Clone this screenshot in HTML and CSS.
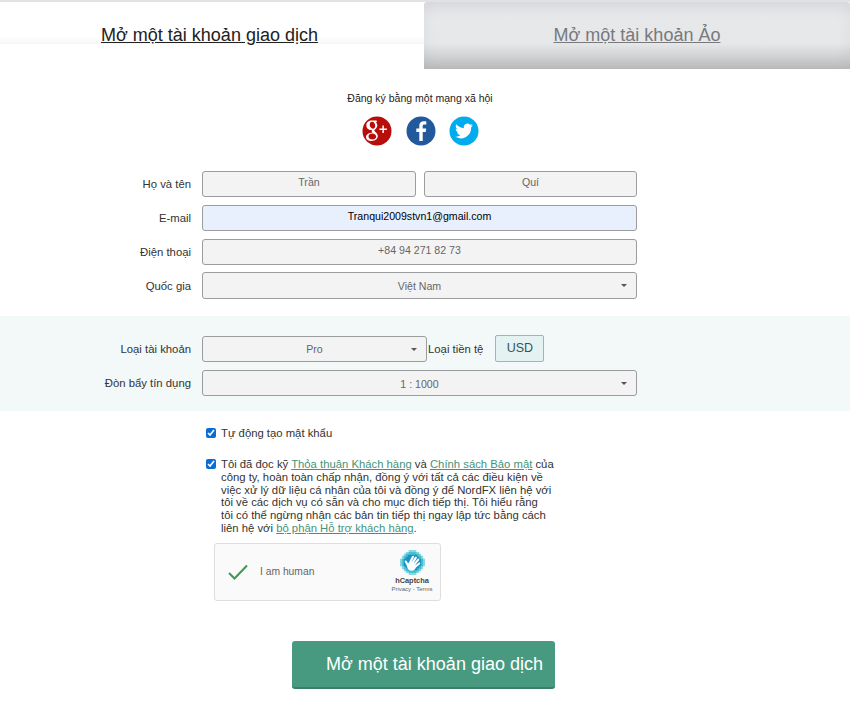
FILE: index.html
```html
<!DOCTYPE html>
<html lang="vi">
<head>
<meta charset="utf-8">
<title>Mở một tài khoản giao dịch</title>
<link rel="stylesheet" href="styles.css">
</head>
<body>
<div class="tabs">
  <div class="tab tab-active"><a href="#">Mở một tài khoản giao dịch</a></div>
  <div class="tab tab-demo"><a href="#">Mở một tài khoản Ảo</a></div>
</div>
<section class="social">
  <p class="social-title">Đăng ký bằng một mạng xã hội</p>
  <div class="social-icons">
    <svg class="icon" viewBox="0 0 30 30"><circle cx="15" cy="15" r="14.5" fill="#b70e0c"/><path d="M14.500 4.500h-5c-3.300 0-5.200 2.400-5.200 4.900 0 2.600 2 4.600 4.800 4.600l.9-.05c-.5 1.100-.2 2 .6 2.900-3.300 0-6.600 1.400-6.600 4.300 0 2.400 2.600 3.800 5.700 3.800 3.700 0 6.100-2.400 6.100-4.900 0-3.200-3.400-4-3.400-5.500 0-1.400 2.900-2.100 2.900-5.100 0-1.600-.8-2.800-1.700-3.500h1.500zM10.100 5.800c1.800 0 3.100 2 3.100 4.200 0 1.600-.9 2.700-2.300 2.700-1.800 0-3.200-2.100-3.200-4.100 0-1.600.9-2.800 2.400-2.800zm.2 11.700c2.200.05 3.900 1.500 3.900 3.100 0 1.700-1.500 2.900-3.600 2.900-2.300 0-4.100-1.400-4.100-3.100 0-1.800 1.700-2.950 3.800-2.900z" fill="#fff"/><path d="M20.400 9.500h1.500v3h3V14h-3v3h-1.500v-3h-3v-1.500h3z" fill="#fff"/></svg>
    <svg class="icon" viewBox="0 0 30 30"><circle cx="15" cy="15" r="14.500" fill="#22599d"/><path d="M16.700 25v-9h3l.5-3.500h-3.500v-2.200c0-1 .3-1.700 1.800-1.700h1.800V5.400c-.3 0-1.400-.1-2.600-.1-2.600 0-4.400 1.600-4.400 4.500v2.700h-3V16h3v9z" fill="#fff"/></svg>
    <svg class="icon icon-last" viewBox="0 0 30 30"><circle cx="15" cy="15" r="14.500" fill="#00aced"/><path d="M24 9.300c-.7.300-1.400.5-2.100.6.800-.5 1.300-1.200 1.600-2-.7.400-1.500.7-2.300.9a3.700 3.700 0 0 0-6.300 3.400c-3-.15-5.800-1.600-7.600-3.900-1 1.700-.5 3.800 1.100 4.900-.6 0-1.200-.2-1.700-.5 0 1.800 1.300 3.300 3 3.700-.5.150-1.100.15-1.700.05.5 1.500 1.900 2.500 3.500 2.600A7.500 7.500 0 0 1 6 20.600 10.500 10.500 0 0 0 22.200 11.300c.7-.5 1.300-1.200 1.800-2z" fill="#fff"/></svg>
  </div>
</section>
<form class="form">
  <div class="fields">
    <div class="row">
      <label class="label">Họ và tên</label>
      <div class="pair">
        <div class="control text-top">Trần</div>
        <div class="control text-top">Quí</div>
      </div>
    </div>
    <div class="row">
      <label class="label">E-mail</label>
      <div class="control text-top autofill">Tranqui2009stvn1@gmail.com</div>
    </div>
    <div class="row">
      <label class="label">Điện thoại</label>
      <div class="control text-top">+84 94 271 82 73</div>
    </div>
    <div class="row">
      <label class="label">Quốc gia</label>
      <div class="control select">Việt Nam<span class="caret"></span></div>
    </div>
  </div>
  <div class="band">
    <div class="row">
      <label class="label">Loại tài khoản</label>
      <div class="account">
        <div class="control select account-type">Pro<span class="caret"></span></div>
        <span class="currency-label">Loại tiền tệ</span>
        <span class="currency">USD</span>
      </div>
    </div>
    <div class="row">
      <label class="label">Đòn bẩy tín dụng</label>
      <div class="control select leverage">1 : 1000<span class="caret"></span></div>
    </div>
  </div>
  <div class="agreements">
    <label class="check check-auto"><input type="checkbox" checked><span>Tự động tạo mật khẩu</span></label>
    <label class="check check-terms"><input type="checkbox" checked><span>Tôi đã đọc kỹ <a href="#">Thỏa thuận Khách hàng</a> và <a href="#">Chính sách Bảo mật</a> của công ty, hoàn toàn chấp nhận, đồng ý với tất cả các điều kiện về việc xử lý dữ liệu cá nhân của tôi và đồng ý để NordFX liên hệ với tôi về các dịch vụ có sẵn và cho mục đích tiếp thị. Tôi hiểu rằng<br>tôi có thể ngừng nhận các bản tin tiếp thị ngay lập tức bằng cách<br>liên hệ với <a href="#">bộ phận Hỗ trợ khách hàng</a>.</span></label>
  </div>
  <div class="captcha">
    <svg class="captcha-check" viewBox="0 0 20 16"><path d="M1 9l5.500 5.500L19 1.500" fill="none" stroke="#3d9a4f" stroke-width="2"/></svg>
    <span class="captcha-text">I am human</span>
    <div class="captcha-brand">
      <svg class="captcha-logo" viewBox="0 0 26 26">
        <path d="M9 0h8v2h3v2h2v2h2v3h2v8h-2v3h-2v2h-2v2h-3v2H9v-2H6v-2H4v-2H2v-3H0V9h2V6h2V4h2V2h3z" fill="#8ad8df"/>
        <path d="M9 2h8v2h3v2h2v3h2v8h-2v3h-2v2h-3v2H9v-2H6v-2H4v-3H2V9h2V6h2V4h3z" fill="#49bfd2"/>
        <path d="M8 5h10v2h2v2h2v8h-2v2h-2v2H8v-2H6v-2H4V9h2V7h2z" fill="#1f90c2"/>
        <g fill="none" stroke="#fff" stroke-width="2.200" stroke-linecap="round">
          <path d="M10 14l3.500-7M12 15l4.500-7M14 16l5-6M15 18l5-4M8.500 16.500L6 12"/>
        </g>
        <circle cx="12" cy="17" r="4.600" fill="#fff"/>
      </svg>
      <span class="captcha-name">hCaptcha</span>
      <span class="captcha-links">Privacy - Terms</span>
    </div>
  </div>
  <div class="submit-wrap"><button class="submit" type="button">Mở một tài khoản giao dịch</button></div>
</form>
</body>
</html>
```

FILE: styles.css
```css
* { box-sizing: border-box; }
html, body { margin: 0; padding: 0; }
body {
  width: 850px;
  background: #fff;
  font-family: "Liberation Sans", Arial, sans-serif;
  font-size: 12px;
  color: #222;
  overflow: hidden;
}
.tabs {
  display: flex;
  height: 69px;
  padding-top: 2px;
  background: linear-gradient(#e2e2e2 0, #e2e2e2 2px, #fff 2px);
}
.tab {
  padding-top: 22px;
  text-align: center;
  font-size: 18px;
  line-height: 22px;
}
.tab a { color: inherit; }
.tab-active {
  flex: 0 0 424px;
  height: 42px;
  padding-right: 5px;
  color: #222;
  border-radius: 0 3px 0 0;
  background: linear-gradient(#fff 0, #fff 82%, #f7f7f7 100%);
}
.tab-demo {
  flex: 0 0 426px;
  height: 67px;
  color: #77797d;
  border-radius: 3px 3px 0 0;
  background: linear-gradient(#dedfe2 0, #e7e8ea 25%, #e6e7e9 62%, #bcbdbf 100%);
  box-shadow: inset 0 0 16px rgba(0, 0, 0, .05);
}
.social {
  display: flex;
  flex-direction: column;
  align-items: center;
  padding: 22px 10px 25px 0;
}
.social-title {
  margin: 0;
  font-size: 10.500px;
  line-height: 14px;
  color: #222;
}
.social-icons {
  display: flex;
  gap: 14px;
  margin-top: 11px;
  height: 30px;
}
.icon { width: 30px; height: 30px; display: block; }
.icon-last { margin-left: -1px; }
.fields { display: flex; flex-direction: column; gap: 8px; }
.fields .row:last-child { margin-top: -1px; }
.row {
  display: grid;
  grid-template-columns: 191px 435px;
  column-gap: 11px;
  align-items: center;
}
.label {
  text-align: right;
  font-size: 11.330px;
  color: #333;
  line-height: 14px;
}
.pair { display: grid; grid-template-columns: 214px 213px; column-gap: 8px; }
.control {
  position: relative;
  height: 26px;
  border: 1px solid #9a9c9e;
  border-radius: 3px;
  background: #f3f3f3;
  color: #666;
  font-size: 10.600px;
  text-align: center;
  line-height: 24px;
}
.text-top { line-height: 20px; }
.autofill { background: #e8f0fe; color: #000; }
.select { height: 27px; line-height: 26px; }
.caret {
  position: absolute;
  right: 9px;
  top: 11px;
  border: 3.500px solid transparent;
  border-top: 3.500px solid #555;
  border-bottom: 0;
}
.band {
  margin-top: 17px;
  height: 95px;
  padding-top: 19px;
  background: #f3f8f8;
  display: flex;
  flex-direction: column;
  gap: 8px;
}
.account { display: flex; align-items: center; }
.account-type { width: 225px; height: 26px; line-height: 24px; }
.currency-label { margin-left: 1px; font-size: 11.330px; color: #333; }
.currency {
  margin-left: 12px;
  width: 49px;
  height: 27px;
  border: 1px solid #9fb5b5;
  border-radius: 2px;
  background: #e4f2f2;
  color: #33545a;
  font-size: 12.500px;
  line-height: 24px;
  text-align: center;
}
.leverage { height: 26px; line-height: 26px; }
.agreements { display: flex; flex-direction: column; margin-left: 206px; width: 352px; padding-top: 16px; }
.check { display: grid; grid-template-columns: 15px 1fr; font-size: 11.300px; line-height: 12.800px; color: #333; }
.check input { width: 10px; height: 10px; margin: 1px 0 0; accent-color: #0a6cd6; }
.check-auto { height: 14px; }
.check-terms { margin-top: 17px; }
.check a { color: #45947a; }
.captcha {
  display: flex;
  align-items: center;
  width: 227px;
  height: 58px;
  margin: 8px 0 0 214px;
  border: 1px solid #dedede;
  border-radius: 3px;
  background: #fafafa;
}
.captcha-check { width: 20px; height: 16px; margin-left: 13px; }
.captcha-text { margin-left: 12px; font-size: 10.300px; color: #666; }
.captcha-brand {
  margin-left: auto;
  margin-right: 0;
  width: 56px;
  display: flex;
  flex-direction: column;
  align-items: center;
}
.captcha-logo { width: 25px; height: 25px; }
.captcha-name { font-size: 7.400px; font-weight: 700; color: #444; margin-top: 1px; line-height: 9px; }
.captcha-links { font-size: 6px; color: #666; line-height: 9px; }
.submit-wrap { margin: 40px 0 0 292px; }
.submit {
  display: block;
  width: 263px;
  height: 48px;
  padding: 2px 0 0 22px;
  border: 0;
  border-bottom: 2px solid #3b7f69;
  border-radius: 3px;
  background: #479a80;
  color: #fff;
  font-family: "Liberation Sans", Arial, sans-serif;
  font-size: 18px;
}
```
